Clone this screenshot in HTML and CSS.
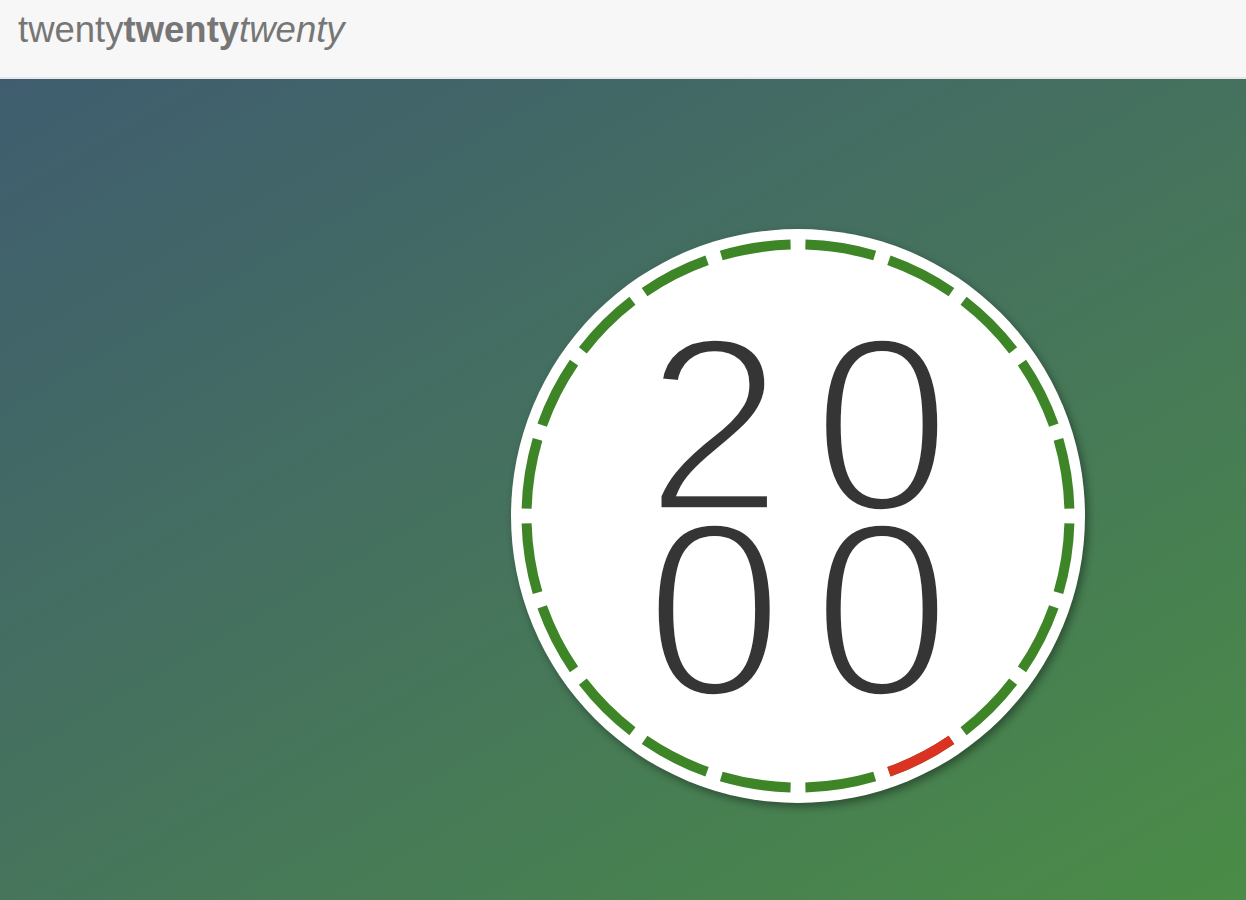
FILE: index.html
```html
<!DOCTYPE html>
<html lang="en">
<head>
<meta charset="utf-8">
<title>twentytwentytwenty</title>
<link rel="stylesheet" href="styles.css">
</head>
<body>
<header class="topbar">
  <div class="logo"><span class="w-regular">twenty</span><span class="w-bold">twenty</span><span class="w-italic">twenty</span></div>
</header>
<main class="stage">
  <div class="clock">
    <svg class="ring" viewBox="0 0 574 574" width="574" height="574" aria-hidden="true">
      <circle class="ring-green" cx="287" cy="287" r="271.5" pathLength="360"></circle>
      <circle class="ring-red" cx="287" cy="287" r="271.5" pathLength="360"></circle>
    </svg>
    <div class="digits">
      <span class="digit">2</span><span class="digit">0</span>
      <span class="digit">0</span><span class="digit">0</span>
    </div>
  </div>
</main>
</body>
</html>
```
FILE: styles.css
```css
html, body {
  margin: 0;
  padding: 0;
}
body {
  width: 1246px;
  height: 900px;
  overflow: hidden;
  font-family: "Liberation Sans", Arial, sans-serif;
}
.topbar {
  height: 77px;
  background: #f7f7f7;
  border-bottom: 2px solid #e6e7ea;
  box-sizing: content-box;
  padding: 0 0 0 18px;
}
.logo {
  font-size: 36.5px;
  line-height: 41px;
  padding-top: 9px;
  color: #767676;
}
.w-bold { font-weight: 700; }
.w-italic { font-style: italic; }
.stage {
  height: 821px;
  box-sizing: border-box;
  padding: 150px 0 0 511px;
  background: linear-gradient(150deg, #3f5d6f 0%, #45715f 45%, #4a8c46 100%);
  display: flex;
  align-items: flex-start;
}
.clock {
  position: relative;
  width: 574px;
  height: 574px;
  border-radius: 50%;
  background: #ffffff;
  box-shadow: 3px 4px 9px rgba(0, 0, 0, 0.38);
  display: flex;
  align-items: center;
  justify-content: center;
}
.ring {
  position: absolute;
  left: 0;
  top: 0;
}
.ring circle {
  fill: none;
  stroke-width: 10;
  stroke-linecap: butt;
}
.ring-green {
  stroke: #3d8527;
  stroke-dasharray: 14.83 3.17;
  stroke-dashoffset: -1.585;
}
.ring-red {
  stroke: #dc3222;
  stroke-dasharray: 14.83 345.17;
  stroke-dashoffset: -55.585;
}
.digits {
  position: relative;
  display: grid;
  grid-template-columns: 167.5px 167.5px;
  grid-template-rows: 185px 185px;
  padding-top: 3px;
  font-family: "Liberation Sans", Arial, sans-serif;
  font-weight: 400;
  font-size: 248px;
  line-height: 185px;
  color: #353535;
  text-align: center;
  -webkit-text-stroke: 7.5px #ffffff;
}
.digit {
  display: block;
}
```
